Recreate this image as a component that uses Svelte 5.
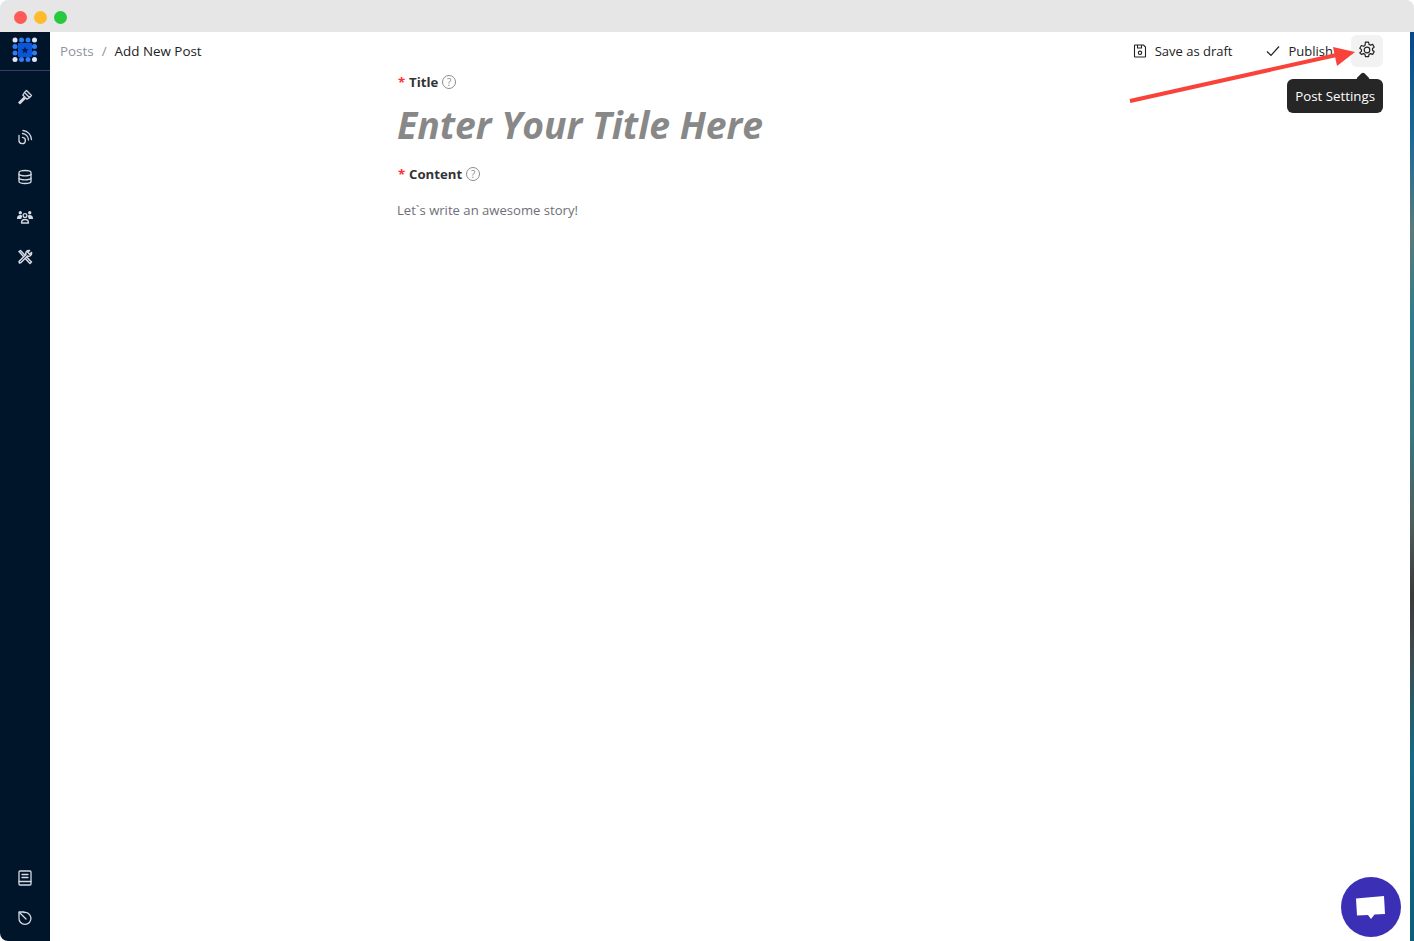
<script>
  const topIcons = ['hammer', 'signal', 'database', 'team', 'tools'];
  const bottomIcons = ['book', 'history'];
  const grid = [3, 9.5, 16, 22.5];
  const dots = [];
  for (const [row, y] of grid.entries()) {
    for (const [col, x] of grid.entries()) {
      const corner = (col === 0 || col === 3) && (row === 0 || row === 3);
      dots.push({ x, y, fill: corner ? '#dbe6fb' : '#2f7cf6' });
    }
  }
</script>

<div class="window">
  <header class="titlebar">
    <span class="light red"></span>
    <span class="light yellow"></span>
    <span class="light green"></span>
  </header>

  <div class="main">
    <aside class="sidebar">
      <div class="logo">
        <svg width="26" height="26" viewBox="0 0 26 26">
          {#each dots as d}
            <circle cx={d.x} cy={d.y} r="2.500" fill={d.fill} />
          {/each}
          <rect x="6" y="6" width="14" height="14" rx="1" fill="#0b55d8" />
          <path d="M13 9.500l1 2.500 2.600.2-2 1.700.7 2.600-2.300-1.400-2.300 1.400.7-2.600-2-1.700 2.600-.2z" fill="#04204f" />
        </svg>
      </div>
      <nav class="nav">
        {#each topIcons as name}
          <span class="nav-item">
            {@render icon(name)}
          </span>
        {/each}
      </nav>
      <nav class="nav bottom">
        {#each bottomIcons as name}
          <span class="nav-item">
            {@render icon(name)}
          </span>
        {/each}
      </nav>
    </aside>

    <main class="content">
      <div class="topbar">
        <div class="crumbs">
          <span class="muted">Posts</span>
          <span class="muted sep">/</span>
          <span>Add New Post</span>
        </div>
        <div class="actions">
          <button class="action draft">
            <svg width="14" height="14" viewBox="0 0 14 14" fill="none" stroke="#222" stroke-width="1.100">
              <path d="M1.500 1h9l2 2v9.500a.5.500 0 0 1-.5.500h-10a.5.500 0 0 1-.5-.5v-11a.5.500 0 0 1 .5-.5z" />
              <path d="M4.500 1v3h4V1" />
              <circle cx="7" cy="8.800" r="1.700" />
            </svg>
            Save as draft
          </button>
          <button class="action publish">
            <svg width="14" height="14" viewBox="0 0 14 14" fill="none" stroke="#222" stroke-width="1.200">
              <path d="M1 7.500l4 4 8-9" />
            </svg>
            Publish
          </button>
          <button class="gear" aria-label="Post Settings">
            <svg width="18" height="18" viewBox="0 0 16 16" fill="none" stroke="#222" stroke-width="1.050" stroke-linejoin="round">
              <path d="M6.600 1h2.800l.4 2 1.300.7 1.900-.7 1.400 2.400-1.500 1.300v1.500l1.500 1.300-1.400 2.400-1.900-.7-1.300.7-.4 2H6.600l-.4-2-1.300-.7-1.900.7L1.600 10.500l1.500-1.300V7.700L1.600 6.400 3 4l1.900.7 1.300-.7z" />
              <circle cx="8" cy="8" r="2.500" />
            </svg>
          </button>
          <div class="tooltip">Post Settings</div>
        </div>
      </div>

      <form class="form">
        <div class="label first">
          <span class="req">*</span>Title
          <span class="help">?</span>
        </div>
        <div class="title-input">Enter Your Title Here</div>
        <div class="label second">
          <span class="req">*</span>Content
          <span class="help">?</span>
        </div>
        <div class="placeholder">Let`s write an awesome story!</div>
      </form>

      <svg class="arrow" width="240" height="70" viewBox="0 0 240 70">
        <path d="M1 62L212 15" stroke="#f9423a" stroke-width="4" fill="none" />
        <path d="M204 8L226 13 208 27z" fill="#f9423a" />
      </svg>
    </main>

    <div class="wallpaper"></div>
  </div>

  <button class="chat" aria-label="Chat">
    <svg width="32" height="28" viewBox="0 0 32 28">
      <path d="M1 5.500L29 3l1 18-10.500.6L16 26l-3-4.100L2 22.500z" fill="#fff" />
    </svg>
  </button>
</div>

{#snippet icon(name)}
  <svg width="16" height="16" viewBox="0 0 16 16" fill="none" stroke="#d5d9e4" stroke-width="1.300" stroke-linejoin="round" stroke-linecap="round">
    {#if name === 'hammer'}
      <path d="M7.500 3.500L9.500 1.500l5 5-2 2z" />
      <path d="M7.500 3.500L5.800 6l4.200 4.200 2.500-1.700" />
      <path d="M7 8.500L2 13.500l1 1 5-5" stroke-width="1.600" />
    {:else if name === 'signal'}
      <path d="M2 6.500v5a3.200 3.200 0 1 0 3.500-3.200" />
      <path d="M5.500 4.500a6.500 6.500 0 0 1 6 6.500" />
      <path d="M6 1.500a9.500 9.500 0 0 1 8.500 9" />
    {:else if name === 'database'}
      <path d="M2 3.500C2 2.200 4.500 1.500 8 1.500s6 .7 6 2v9c0 1.300-2.500 2-6 2s-6-.7-6-2z" />
      <path d="M2 5.500c1 1 3.500 1.300 6 1.300s5-.3 6-1.300" />
      <path d="M2 9.500c1 1 3.500 1.300 6 1.300s5-.3 6-1.300" />
    {:else if name === 'team'}
      <circle cx="8" cy="6.500" r="1.900" />
      <path d="M4.500 14c0-2.500 1.500-3.500 3.500-3.500s3.500 1 3.500 3.500z" />
      <circle cx="3.300" cy="3.800" r="1.700" fill="#d5d9e4" stroke="none" />
      <circle cx="12.700" cy="3.800" r="1.700" fill="#d5d9e4" stroke="none" />
      <path d="M0 9.500c0-2 1.200-3.500 3.300-3.500 1 0 1.500.3 2 .8L4.200 10H0zM16 9.500c0-2-1.200-3.500-3.300-3.500-1 0-1.500.3-2 .8L11.800 10H16z" fill="#d5d9e4" stroke="none" />
    {:else if name === 'tools'}
      <path d="M2 2.500L3.500 1.500l9.500 10 1.500 1.500-1.500 1.500-1.500-1.500z" stroke-width="1.500" />
      <path d="M14.500 3.500a3 3 0 0 1-4 3.500L4 13.500 2.500 14 2 12.500 9 5.500a3 3 0 0 1 3.500-4L10.800 3.300l1.800 1.900z" fill="#001529" stroke-width="1.500" />
    {:else if name === 'book'}
      <rect x="2" y="1" width="12" height="14" rx="1" />
      <path d="M2 11.500h12" />
      <path d="M5 4.500h6M5 7.500h6" />
    {:else if name === 'history'}
      <path d="M2 7V2h5" />
      <path d="M2.500 2.500L9 9" />
      <path d="M7 2.500a6 6 0 1 1-5 5.500" />
    {/if}
  </svg>
{/snippet}

<style>
  :global(body) {
    margin: 0;
    background: #fff;
    font-family: "Open Sans", "Noto Sans", sans-serif;
    overflow: hidden;
  }
  .window {
    height: 941px;
    display: flex;
    flex-direction: column;
    position: relative;
  }
  .titlebar {
    height: 32px;
    flex-shrink: 0;
    background: #e6e6e6;
    border-radius: 8px 8px 0 0;
    display: flex;
    align-items: center;
    gap: 7px;
    padding: 2px 0 0 14px;
    box-sizing: border-box;
  }
  .light {
    width: 13px;
    height: 13px;
    border-radius: 50%;
  }
  .red { background: #fd5a58; }
  .yellow { background: #febb2e; }
  .green { background: #28c93f; }
  .main {
    flex: 1;
    display: flex;
    min-height: 0;
  }
  .sidebar {
    width: 50px;
    flex-shrink: 0;
    background: #001529;
    display: flex;
    flex-direction: column;
    border-bottom-left-radius: 8px;
  }
  .logo {
    height: 39px;
    display: flex;
    justify-content: center;
    align-items: center;
    border-bottom: 1px solid #3d3a66;
    box-sizing: border-box;
    padding-bottom: 3px;
  }
  .nav {
    display: flex;
    flex-direction: column;
    padding-top: 6px;
  }
  .nav.bottom {
    margin-top: auto;
    padding: 0 0 3px;
  }
  .nav-item {
    height: 40px;
    display: flex;
    align-items: center;
    justify-content: center;
  }
  .content {
    flex: 1;
    position: relative;
    min-width: 0;
  }
  .topbar {
    height: 38px;
    display: flex;
    align-items: center;
    justify-content: space-between;
    padding: 0 27px 0 10px;
    font-size: 13.400px;
    color: #222;
  }
  .crumbs {
    display: flex;
    gap: 8px;
    margin-top: -1px;
  }
  .muted { color: #8f939b; }
  .actions {
    display: flex;
    align-items: center;
    position: relative;
  }
  .action {
    display: flex;
    align-items: center;
    gap: 8px;
    border: 0;
    background: none;
    padding: 0;
    font: inherit;
    font-size: 13px;
    color: #222;
  }
  .draft { margin-right: 33px; }
  .publish { margin-right: 18px; gap: 9px; }
  .gear {
    width: 32px;
    height: 32px;
    border: 0;
    padding: 0 0 3px;
    border-radius: 6px;
    background: #f2f2f2;
    display: flex;
    align-items: center;
    justify-content: center;
  }
  .tooltip {
    position: absolute;
    right: 0;
    top: 44px;
    height: 34px;
    line-height: 34px;
    padding: 0 8px;
    background: #262626;
    color: #fff;
    border-radius: 6px;
    font-size: 13.300px;
    white-space: nowrap;
  }
  .tooltip::before {
    content: "";
    position: absolute;
    top: -5px;
    right: 15px;
    width: 10px;
    height: 10px;
    background: #262626;
    transform: rotate(45deg);
    border-radius: 2px;
  }
  .form {
    margin-left: 347px;
    width: 640px;
  }
  .label {
    font-size: 13.200px;
    font-weight: 700;
    color: #333;
    display: flex;
    align-items: center;
    height: 20px;
  }
  .label.first { margin-top: 2px; }
  .label.second { margin-top: 17px; }
  .req {
    color: #ff2f36;
    margin: 0 4px 0 1px;
    font-weight: 700;
    width: 7px;
  }
  .help {
    width: 12px;
    height: 12px;
    border: 1px solid #8c8c8c;
    border-radius: 50%;
    color: #8c8c8c;
    font-size: 10px;
    font-weight: 400;
    line-height: 12px;
    text-align: center;
    margin-left: 4px;
  }
  .title-input {
    font-size: 37.300px;
    font-weight: 700;
    font-style: italic;
    color: #888;
    line-height: 44px;
    margin-top: 11px;
  }
  .placeholder {
    font-size: 13.100px;
    color: #6f6f77;
    margin-top: 16px;
    line-height: 20px;
  }
  .arrow {
    position: absolute;
    left: 1079px;
    top: 7px;
    pointer-events: none;
  }
  .wallpaper {
    width: 4px;
    flex-shrink: 0;
    background: linear-gradient(180deg, #07488a 0%, #1f6a92 12%, #5d7a7c 22%, #2f7b8c 32%, #3c7480 44%, #4d5f5c 54%, #3a3a3a 62%, #3f4a4e 68%, #176a80 80%, #0d5f76 100%);
  }
  .chat {
    position: absolute;
    left: 1341px;
    top: 877px;
    width: 60px;
    height: 60px;
    border: 0;
    padding: 0;
    border-radius: 50%;
    background: #3b2fb5;
    display: flex;
    align-items: center;
    justify-content: center;
  }
</style>
